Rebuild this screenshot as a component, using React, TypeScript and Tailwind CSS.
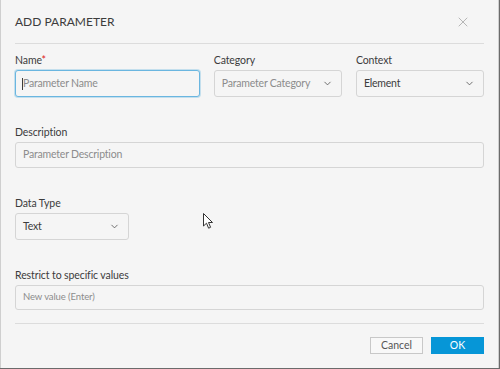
import { ChevronDown, X } from "lucide-react";

const font = { fontFamily: 'Lato, "Noto Sans", sans-serif' };

function Label({ children, required }: { children: React.ReactNode; required?: boolean }) {
  return (
    <div className="text-[10.5px] tracking-[-0.1px] leading-[14px] text-[#3c3c3c] mb-[3px] h-[14px]">
      {children}
      {required && <span className="text-[#dd2222]">*</span>}
    </div>
  );
}

function Select({ value, placeholder }: { value: string; placeholder?: boolean }) {
  return (
    <div className="h-[27px] rounded-[3px] border border-[#d5d5d5] bg-[#f5f5f5] flex items-center justify-between pl-[7px] pr-[8px]">
      <span className={`text-[10.5px] tracking-[-0.2px] whitespace-nowrap ${placeholder ? "text-[#8c8c8c]" : "text-[#3c3c3c]"}`}>{value}</span>
      <ChevronDown className="w-[11px] h-[11px] text-[#555]" strokeWidth={1.8} />
    </div>
  );
}

export default function App() {
  return (
    <div className="w-[500px] h-[369px] bg-[#6b6b6b] overflow-hidden" style={font}>
      <div className="relative w-[499px] h-[368px] bg-[#f5f5f5] border-l border-r border-[#cfcfcf] px-[14px] flex flex-col">
        <div className="flex items-center justify-between h-[44px] border-b border-[#dcdcdc]">
          <h1 className="text-[12px] text-[#3c3c3c] pt-[1px]">ADD PARAMETER</h1>
          <X className="w-[16px] h-[16px] text-[#b0b0b0] mr-[13px]" strokeWidth={1.4} />
        </div>

        <div className="flex gap-[14px] mt-[9px]">
          <div className="w-[186px]">
            <Label required>Name</Label>
            <div className="h-[27px] rounded-[3px] border border-[#6ab6e0] bg-[#f5f5f5] flex items-center pl-[6px] shadow-[0_0_0_1px_rgba(106,182,224,0.35)]">
              <span className="w-px h-[12px] bg-[#3c3c3c]" />
              <span className="text-[10.5px] tracking-[-0.2px] text-[#8c8c8c]">Parameter Name</span>
            </div>
          </div>
          <div className="w-[129px]">
            <Label>Category</Label>
            <Select value="Parameter Category" placeholder />
          </div>
          <div className="w-[129px]">
            <Label>Context</Label>
            <Select value="Element" />
          </div>
        </div>

        <div className="mt-[28px]">
          <Label>Description</Label>
          <div className="h-[26px] rounded-[3px] border border-[#d5d5d5] bg-[#f5f5f5] flex items-center pl-[7px]">
            <span className="text-[10.5px] tracking-[-0.2px] text-[#8c8c8c]">Parameter Description</span>
          </div>
        </div>

        <div className="mt-[28px] w-[114px]">
          <Label>Data Type</Label>
          <Select value="Text" />
        </div>

        <div className="mt-[28px]">
          <Label>Restrict to specific values</Label>
          <div className="h-[25px] rounded-[3px] border border-[#d5d5d5] bg-[#f5f5f5] flex items-center pl-[7px]">
            <span className="text-[9.5px] tracking-[-0.1px] text-[#8c8c8c]">New value (Enter)</span>
          </div>
        </div>

        <div className="mt-[13px] border-t border-[#dcdcdc]" />

        <div className="flex justify-end gap-[8px] mt-[13px]">
          <button className="w-[53px] h-[17px] border border-[#c8c8c8] bg-[#f8f8f8] text-[10.5px] leading-[15px] text-[#555]">
            Cancel
          </button>
          <button className="w-[53px] h-[17px] bg-[#0696d7] text-[10.5px] leading-[17px] text-white">
            OK
          </button>
        </div>

        <svg className="absolute left-[202px] top-[213px]" width="11" height="17" viewBox="0 0 11 17">
          <path d="M0.5 0.5 L0.5 13 L3.5 10.2 L5.6 15.2 L7.6 14.3 L5.5 9.5 L9.5 9.5 Z" fill="white" stroke="#333" strokeWidth="1" />
        </svg>
      </div>
    </div>
  );
}
